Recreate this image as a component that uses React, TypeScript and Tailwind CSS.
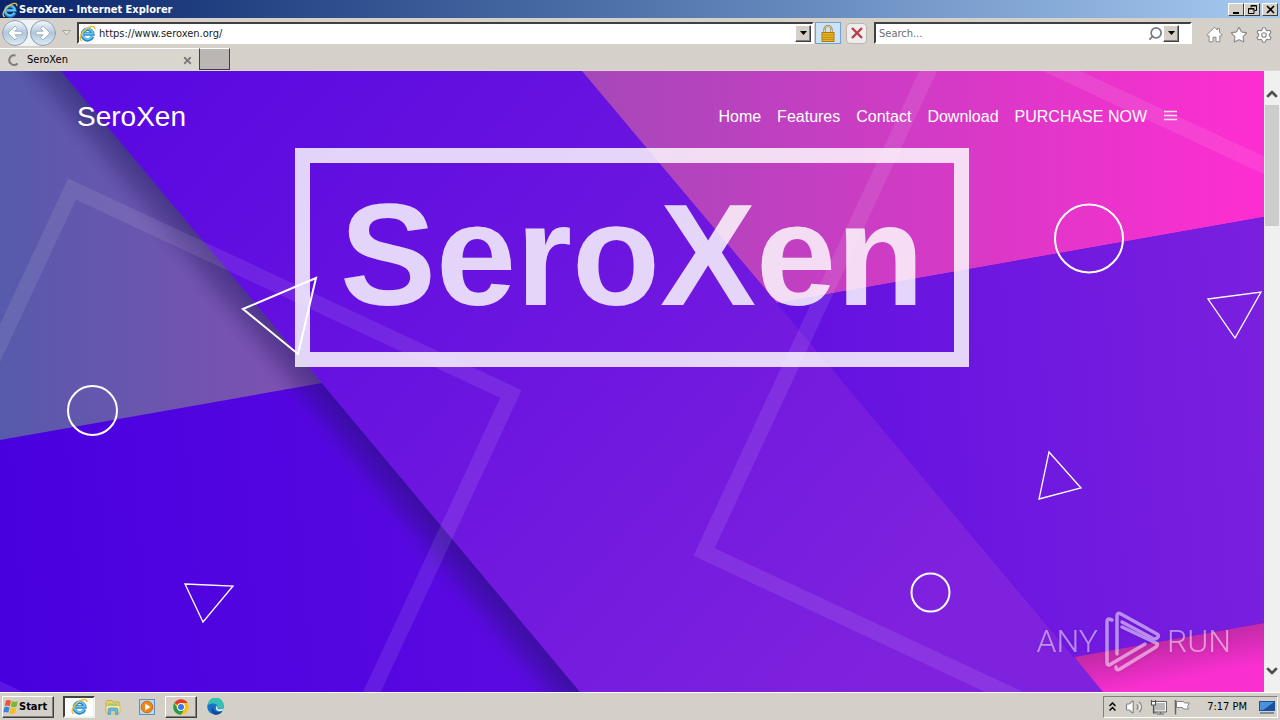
import type { ReactNode } from 'react';
import { ChevronDown, ChevronUp, Search, Settings, Star, Volume2, X } from 'lucide-react';

const NAV_LINKS = ['Home', 'Features', 'Contact', 'Download', 'PURCHASE NOW'];

const RAISED = 'border border-t-white border-l-white border-r-[#404040] border-b-[#404040] bg-[#d4d0c8]';

function IeLogo({ size }: { size: number }) {
  return (
    <svg width={size} height={size} viewBox="0 0 20 20" fill="none" aria-hidden>
      <path d="M16 13.4A6.2 6.2 0 1 1 16.300 10.500H6" stroke="#2484c6" strokeWidth="4" />
      <path d="M15.600 13.400A6.100 6.100 0 1 1 16.300 10.300H6" stroke="#6cc8f2" strokeWidth="2" />
      <path d="M3 18.200C-.8 17 2.500 9 8.500 4.700 13 1.300 19 .2 18.600 4.500" stroke="#f0bd35" strokeWidth="1.700" strokeLinecap="round" />
    </svg>
  );
}

function NavArrow({ label, back }: { label: string; back?: boolean }) {
  return (
    <button
      type="button"
      aria-label={label}
      className="flex size-[26px] items-center justify-center rounded-full border border-[#8d99a5] bg-linear-to-b from-[#f3f8fc] via-[#b2c7da] to-[#dcebf6]"
    >
      <svg width="20" height="20" viewBox="0 0 20 20" aria-hidden className={back ? '' : 'rotate-180'}>
        <path d="M3 10l7-7 2.500 2.500L9.800 8.200H17v3.600H9.800l2.700 2.700L10 17z" fill="#fff" stroke="#9db3c8" strokeWidth="1" />
      </svg>
    </button>
  );
}

function DropButton({ label }: { label: string }) {
  return (
    <button type="button" aria-label={label} className={`flex h-[17px] w-4 items-center justify-center shadow-[inset_-1px_-1px_0_#808080] ${RAISED}`}>
      <svg width="7" height="4" viewBox="0 0 7 4" aria-hidden>
        <path d="M0 0h7L3.500 4z" fill="#000" />
      </svg>
    </button>
  );
}

function TitleBar() {
  const button = `flex h-[13px] w-4 items-center justify-center ${RAISED}`;
  return (
    <header className="flex h-[18px] items-center justify-between bg-linear-to-r from-[#0a246a] to-[#a6caf0] pr-[2px] pl-[2px]">
      <h1 className="flex items-center gap-px pt-px text-[11px] leading-4 font-bold text-white">
        <IeLogo size={16} />
        SeroXen - Internet Explorer
      </h1>
      <div className="flex">
        <button type="button" aria-label="Minimize" className={button}>
          <svg width="9" height="9" viewBox="0 0 9 9" aria-hidden>
            <path d="M1 7h6v2H1z" />
          </svg>
        </button>
        <button type="button" aria-label="Restore" className={button}>
          <svg width="9" height="9" viewBox="0 0 9 9" fill="none" stroke="#000" aria-hidden>
            <path d="M3 2.500V.5h5.500v5H6.500M3 1h5.500M.5 3.500h5.500v5H.5zM.5 4h5.500" />
          </svg>
        </button>
        <button type="button" aria-label="Close" className={`ml-[2px] ${button}`}>
          <svg width="9" height="9" viewBox="0 0 9 9" fill="none" stroke="#000" strokeWidth="1.700" aria-hidden>
            <path d="M1 1l7 7M8 1L1 8" />
          </svg>
        </button>
      </div>
    </header>
  );
}

function Toolbar() {
  const field = 'flex h-[22px] items-center border-2 border-t-[#404040] border-l-[#404040] border-r-white border-b-white bg-white pr-px';
  return (
    <div className="flex h-[30px] items-center pr-[7px] pl-[2px]">
      <div className="flex items-center gap-[2px] rounded-full bg-[#eef3f7]">
        <NavArrow label="Back" back />
        <NavArrow label="Forward" />
      </div>
      <button type="button" aria-label="Recent pages" className="flex h-5 w-[21px] items-center justify-center">
        <svg width="9" height="6" viewBox="0 0 9 6" aria-hidden>
          <path d="M.5.5h8l-4 4.500z" fill="#e4e1dc" stroke="#aaa69f" />
        </svg>
      </button>
      <div className={`min-w-0 flex-1 ${field}`}>
        <IeLogo size={17} />
        <input
          aria-label="Address"
          type="text"
          defaultValue="https://www.seroxen.org/"
          className="ml-[3px] min-w-0 flex-1 pt-[2px] text-[11px] text-[#1c1c1c] outline-none"
        />
        <DropButton label="Show address history" />
      </div>
      <button type="button" aria-label="Security report" className="ml-px flex h-[22px] w-[26px] items-center justify-center border border-[#6ba5dc] bg-[#cfe3f8]">
        <svg width="14" height="17" viewBox="0 0 14 17" aria-hidden>
          <path d="M3.500 8V4.500a3.500 3.500 0 0 1 7 0V8" fill="none" stroke="#8d7a3a" strokeWidth="2.200" />
          <path d="M3.500 8V4.500a3.500 3.500 0 0 1 7 0V8" fill="none" stroke="#e6d794" strokeWidth="1" />
          <rect x="1" y="7.500" width="12" height="9" fill="#e9b422" stroke="#a97b10" />
          <path d="M1.500 10h11M1.500 12.500h11M1.500 14.500h11" stroke="#c18e12" />
        </svg>
      </button>
      <button type="button" aria-label="Stop" className="ml-[5px] flex h-[21px] w-[21px] items-center justify-center rounded-sm border border-[#b9b6b2] bg-[#efedee]">
        <svg width="12" height="12" viewBox="0 0 12 12" fill="none" aria-hidden>
          <path d="M1 1l10 10M11 1L1 11" stroke="#bd3c48" strokeWidth="2.400" />
        </svg>
      </button>
      <div className={`ml-[7px] w-[318px] ${field}`}>
        <input
          aria-label="Search"
          type="text"
          placeholder="Search..."
          className="ml-[3px] min-w-0 flex-1 pt-[2px] text-[11px] outline-none placeholder:text-[#6d6d6d]"
        />
        <button type="button" aria-label="Go">
          <Search size={15} color="#777b84" strokeWidth={2.8} className="-scale-x-100" />
        </button>
        <DropButton label="Search options" />
        <span className="w-[10px]" />
      </div>
      <div className="ml-[14px] flex items-center gap-[7px] pt-[3px]">
        <button type="button" aria-label="Home page">
          <svg width="17" height="17" viewBox="0 0 17 17" aria-hidden>
            <path
              d="M8.500 1.200l2.800 2.800V2.500h2.200v3.700l2.800 2.900-1.400 1.300-1-.9v6.300H10v-4.600H7v4.600H3.100V9.500l-1 .9L.7 9.100z"
              fill="#fff"
              stroke="#8a8a8a"
              strokeLinejoin="round"
            />
          </svg>
        </button>
        <button type="button" aria-label="Favorites">
          <Star size={18} fill="#fff" color="#8a8a8a" strokeWidth={1.5} />
        </button>
        <button type="button" aria-label="Tools">
          <Settings size={18} fill="#fff" color="#8a8a8a" strokeWidth={1.6} />
        </button>
      </div>
    </div>
  );
}

function TabStrip() {
  return (
    <div className="flex h-[23px] border-b border-[#dcd6d6]">
      <div className="flex w-[199px] items-center border-t border-white bg-[#d9d5cf] pt-px pr-[6px] pl-2">
        <svg width="12" height="12" viewBox="0 0 12 12" fill="none" aria-hidden>
          <path d="M9.500 9.500A4.800 4.800 0 1 1 7.500 1.500" stroke="#7c7c7c" strokeWidth="2" />
        </svg>
        <span className="ml-[7px] flex-1 text-[11px] leading-4">SeroXen</span>
        <button type="button" aria-label="Close tab">
          <X size={11} color="#7b7b7b" strokeWidth={4} />
        </button>
      </div>
      <button type="button" aria-label="New tab" className="w-[31px] border border-t-white border-l-[#404040] border-r-[#404040] border-b-[#404040] bg-[#bbb6b3]" />
    </div>
  );
}

/** Angled colour panels and the two tilted squares behind the headline. */
function HeroArt() {
  return (
    <svg className="absolute inset-0 size-full" viewBox="0 71 1264 621" preserveAspectRatio="xMidYMid slice" aria-hidden>
      <defs>
        <linearGradient id="base" x1="0" x2="540" y1="500" y2="460" gradientUnits="userSpaceOnUse">
          <stop stopColor="#4900df" />
          <stop offset="1" stopColor="#5c0ae1" />
        </linearGradient>
        <linearGradient id="dusk" x1="0" x2="322" y1="0" y2="0" gradientUnits="userSpaceOnUse">
          <stop stopColor="#575aab" />
          <stop offset="1" stopColor="#8350b2" />
        </linearGradient>
        <linearGradient id="band" x1="130" y1="60" x2="850" y2="700" gradientUnits="userSpaceOnUse">
          <stop stopColor="#5808e1" />
          <stop offset="1" stopColor="#7f22de" />
        </linearGradient>
        <linearGradient id="pink" x1="582" x2="1250" y1="0" y2="0" gradientUnits="userSpaceOnUse">
          <stop stopColor="#a548b9" />
          <stop offset="1" stopColor="#fd2ed1" />
        </linearGradient>
        <linearGradient id="side" x1="830" x2="1264" y1="440" y2="410" gradientUnits="userSpaceOnUse">
          <stop stopColor="#6512e1" />
          <stop offset="1" stopColor="#7a1fde" />
        </linearGradient>
        <linearGradient id="fold" x1="1160" x2="1168" y1="641" y2="682" gradientUnits="userSpaceOnUse">
          <stop stopColor="#c02aa6" />
          <stop offset="1" stopColor="#f92fd0" />
        </linearGradient>
        {/* runs at right angles to the band's left edge */}
        <linearGradient id="shade" x1="322" y1="383" x2="292" y2="408" gradientUnits="userSpaceOnUse">
          <stop stopColor="#1c1460" stopOpacity=".48" />
          <stop offset=".4" stopColor="#1c1460" stopOpacity=".3" />
          <stop offset=".75" stopColor="#1c1460" stopOpacity=".08" />
          <stop offset="1" stopColor="#1c1460" stopOpacity="0" />
        </linearGradient>
      </defs>
      <rect y="71" width="1264" height="621" fill="url(#base)" />
      <path d="M0 71h61l261 312L0 440z" fill="url(#dusk)" />
      <path d="M0 71h61l519 621H460z" fill="url(#shade)" />
      <path d="M61 71h521l521 621H580z" fill="url(#band)" />
      <path d="M582 71h682v146l-487 86z" fill="url(#pink)" />
      <path d="M777 303l487-86v406l-190 34z" fill="url(#side)" />
      <path d="M1074 657l190-34v69h-161z" fill="url(#fold)" />
      <g fill="none" stroke="#fff" strokeOpacity=".09" strokeWidth="16">
        <path d="M72 189l439 205-205 439-439-205z" />
        <path d="M704 552L952 20l532 248-248 532z" />
      </g>
    </svg>
  );
}

function FloatingShapes() {
  return (
    <svg className="pointer-events-none absolute inset-0 size-full" viewBox="0 71 1264 621" preserveAspectRatio="xMidYMid slice" aria-hidden>
      <g fill="none" stroke="#fff" strokeWidth="2">
        <circle cx="92.500" cy="410.500" r="24.500" />
        <circle cx="1089" cy="238.500" r="34" />
        <circle cx="930.500" cy="592.500" r="19" />
        <path d="M243 309l73-31-18 76z" />
      </g>
      <g fill="none" stroke="#fff" strokeWidth="1.300">
        <path d="M1208 299l53-7-26 46z" />
        <path d="M1049 452l32 36-42 11z" />
        <path d="M185 584l48 2-30 36z" />
      </g>
    </svg>
  );
}

function Watermark() {
  return (
    <div className="pointer-events-none absolute right-[33px] bottom-[18px] flex items-center gap-[6px] font-[Roboto,'Liberation_Sans',sans-serif] text-[32px] font-light text-white opacity-50 drop-shadow-sm">
      <span>ANY</span>
      <svg width="57" height="66" viewBox="1109 607 57 66" fill="none" stroke="#fff" strokeWidth="3.500" strokeLinecap="round" strokeLinejoin="round" aria-hidden>
        <path d="M1117 619l-3-1q-2 0-2 3v40q0 5 4 2l34-20" />
        <path d="M1122 653v-38q0-4 4-2l36 20q3 2 0 4t-5 0l-30-16" />
        <path d="M1127 626l34 16q3 1 0 4l-36 22q-4 2-4-2" />
      </svg>
      <span>RUN</span>
    </div>
  );
}

function Page() {
  return (
    <main className="relative flex-1 overflow-hidden font-['Liberation_Sans',Arial,sans-serif] text-white">
      <HeroArt />
      <div className="relative mx-auto flex max-w-[1110px] items-center justify-between pt-[25px] pr-[9px]">
        <a href="#home" className="text-[28px] leading-[42px]">SeroXen</a>
        <nav className="flex items-center gap-4 text-base">
          {NAV_LINKS.map((name) => (
            <a key={name} href="#home">{name}</a>
          ))}
          <button type="button" aria-label="Menu" className="pb-1">
            <svg width="15" height="11" viewBox="0 0 15 11" aria-hidden>
              <path d="M1 1.500h13M1 5.500h13M1 9.500h13" stroke="#fff" strokeOpacity=".85" strokeWidth="1.500" />
            </svg>
          </button>
        </nav>
      </div>
      <div className="relative mt-[10px] flex justify-center">
        <h2 className="border-[15px] border-white/82 px-[30px] pt-[13px] pb-[17px] text-[144px] leading-[159px] font-bold text-white/82">
          SeroXen
        </h2>
      </div>
      <FloatingShapes />
      <Watermark />
    </main>
  );
}

function ScrollBar() {
  return (
    <div className="flex w-4 flex-col items-center bg-[#f0f0f0] text-[#505050]">
      <button type="button" aria-label="Scroll up" className="mt-[11px] flex h-[23px] items-center">
        <ChevronUp size={16} strokeWidth={4} />
      </button>
      <div className="h-[121px] w-[14px] bg-[#cdcdcd]" />
      <button type="button" aria-label="Scroll down" className="mt-auto mb-[11px] flex h-5 items-center">
        <ChevronDown size={16} strokeWidth={4} />
      </button>
    </div>
  );
}

function TaskButton({ label, look, children }: { label: string; look?: 'active' | 'open'; children: ReactNode }) {
  const style =
    look === 'active'
      ? 'border-2 border-t-[#404040] border-l-[#404040] border-r-[#f4f2ee] border-b-[#f4f2ee] bg-white'
      : look === 'open'
        ? 'border border-t-white border-l-white border-r-[#404040] border-b-[#404040] shadow-[inset_-1px_-1px_0_#808080]'
        : '';
  return (
    <button type="button" aria-label={label} className={`flex h-[22px] w-8 items-center justify-center ${style}`}>
      {children}
    </button>
  );
}

function WindowsFlag() {
  return (
    <svg width="16" height="16" viewBox="0 0 16 16" aria-hidden>
      <path d="M3 1.500q2.500-1.200 5 .3L6.800 7.200q-2.500-1.400-5-.2z" fill="#e8562a" />
      <path d="M9 2.200q2.700 1.300 5.800 0L13.500 7.600q-2.800 1.300-5.600 0z" fill="#78b82a" />
      <path d="M1.500 8.200q2.500-1.200 5 .2L5.300 13.800q-2.500-1.500-5-.2z" fill="#3b82d8" />
      <path d="M7.600 8.700q2.800 1.300 5.700 0L12 14.200q-2.900 1.300-5.700 0z" fill="#f5bd1f" />
    </svg>
  );
}

function TaskBar() {
  return (
    <footer className="flex h-7 items-center border-t border-white bg-[#d4d0c8] pr-[2px] pl-[2px] text-[11px]">
      <button type="button" className={`flex h-[22px] w-[52px] items-center pt-px font-bold shadow-[inset_-1px_-1px_0_#808080] ${RAISED}`}>
        <WindowsFlag />
        Start
      </button>
      <div className="ml-[9px] flex gap-[2px]">
        <TaskButton label="Internet Explorer" look="active">
          <IeLogo size={17} />
        </TaskButton>
        <TaskButton label="Windows Explorer">
          <svg width="16" height="16" viewBox="0 0 16 16" aria-hidden>
            <path d="M1 3l1-1.500h5L8.500 3H14v10H1z" fill="#e8cf6e" stroke="#c9a94a" />
            <path d="M3 4.500h9v3H3z" fill="#8bcf7c" />
            <path d="M1 6.500h14V14H1z" fill="#f8e9a2" stroke="#d6bd63" />
            <path d="M3 15.500V11q0-2 2-2h6q2 0 2 2v4.500h-2.500V12h-5v3.500z" fill="#68b9df" stroke="#3e8cba" strokeWidth=".6" />
          </svg>
        </TaskButton>
        <TaskButton label="Windows Media Player">
          <svg width="16" height="16" viewBox="0 0 16 16" aria-hidden>
            <rect x=".5" y=".5" width="15" height="15" fill="#b9d7ed" stroke="#5a91bd" />
            <circle cx="8" cy="8" r="5.800" fill="#ee861c" stroke="#d46a0a" />
            <path d="M6.200 4.500v7l5.300-3.500z" fill="#fff" />
          </svg>
        </TaskButton>
        <TaskButton label="Google Chrome" look="open">
          <svg width="16" height="16" viewBox="0 0 16 16" aria-hidden>
            <circle cx="8" cy="8" r="7.800" fill="#fbc116" />
            <path d="M8 8L1.250 4.100A7.800 7.800 0 0 1 14.750 4.100H8z" fill="#e33b2e" />
            <path d="M8 15.800A7.800 7.800 0 0 1 1.250 4.100L4.600 10z" fill="#269a4c" />
            <path d="M4.600 10L8 15.800l3.400-5.800z" fill="#269a4c" />
            <circle cx="8" cy="8" r="3.900" fill="#fff" />
            <circle cx="8" cy="8" r="3" fill="#3878e8" />
          </svg>
        </TaskButton>
        <TaskButton label="Microsoft Edge">
          <svg width="17" height="17" viewBox="0 0 16 16" aria-hidden>
            <circle cx="8" cy="8" r="7.800" fill="#1674c8" />
            <path d="M.4 7A7.700 7.700 0 0 1 15.800 7.500c0 3.500-5.800 3.500-5.800 1.500 1.500-3-5-5.500-9.600-2z" fill="#35c1b5" />
            <path d="M5.500 8.500c0 4.500 5 5.500 9 3.700-2 3.500-5 3.600-6.500 3.600-4-1-4.500-5.800-2.500-7.300z" fill="#114a96" />
            <path d="M9 7.300c1.500 1.200.8 1.700.8 2.200 0 1.500 3.700 1.700 5.800-.2l-.8 2.500c-4 2-8-.5-5.800-4.500z" fill="#e7edee" />
          </svg>
        </TaskButton>
      </div>
      <div className="ml-auto flex h-[22px] items-center border border-t-[#808080] border-l-[#808080] border-r-white border-b-white pr-[2px] pl-[5px]">
        <button type="button" aria-label="Show hidden icons">
          <svg width="7" height="10" viewBox="0 0 7 10" fill="none" stroke="#000" strokeWidth="1.500" aria-hidden>
            <path d="M.5 4l3-3 3 3M.5 8.500l3-3 3 3" />
          </svg>
        </button>
        <Volume2 size={18} fill="#fff" color="#858585" strokeWidth={1.6} className="ml-[9px]" />
        <svg width="17" height="16" viewBox="0 0 17 16" className="ml-[7px]" aria-hidden>
          <rect x="4.500" y="3.500" width="11" height="8.500" fill="#b8b8b8" stroke="#fff" />
          <path d="M4 2.500h12.500V13H4zM7 15h7M10.500 13v2" fill="none" stroke="#666" />
          <path d="M1.500 1v4.500h4V1M3.500 5.500V14h3" fill="none" stroke="#555" strokeWidth="1.200" />
          <rect x="1.500" y="2.500" width="4" height="3.500" fill="#fff" stroke="#555" />
        </svg>
        <svg width="17" height="16" viewBox="0 0 17 16" className="ml-[7px]" aria-hidden>
          <path d="M2.500 2.500h7l1 1.500h5l-2 3.500 1 2.500h-5l-1-1.500h-6z" fill="#fff" stroke="#858585" />
          <path d="M1.500 1v14.500" stroke="#666" strokeWidth="1.500" />
        </svg>
        <time className="ml-4 pt-[2px]">7:17 PM</time>
        <button type="button" aria-label="Show desktop" className="ml-3">
          <svg width="16" height="14" viewBox="0 0 16 14" aria-hidden>
            <path d="M0 1h16v10H0z" fill="#1b4fa0" />
            <path d="M1 2h14L4 10H1z" fill="#4c91dc" />
            <path d="M1 13h14" stroke="#6c7684" strokeWidth="1.500" />
          </svg>
        </button>
      </div>
    </footer>
  );
}

export default function App() {
  return (
    <div className="flex min-h-screen flex-col bg-[#d5d0c9] font-['DejaVu_Sans_Condensed','DejaVu_Sans',Tahoma,sans-serif] text-black">
      <TitleBar />
      <Toolbar />
      <TabStrip />
      <div className="flex flex-1">
        <Page />
        <ScrollBar />
      </div>
      <TaskBar />
    </div>
  );
}
